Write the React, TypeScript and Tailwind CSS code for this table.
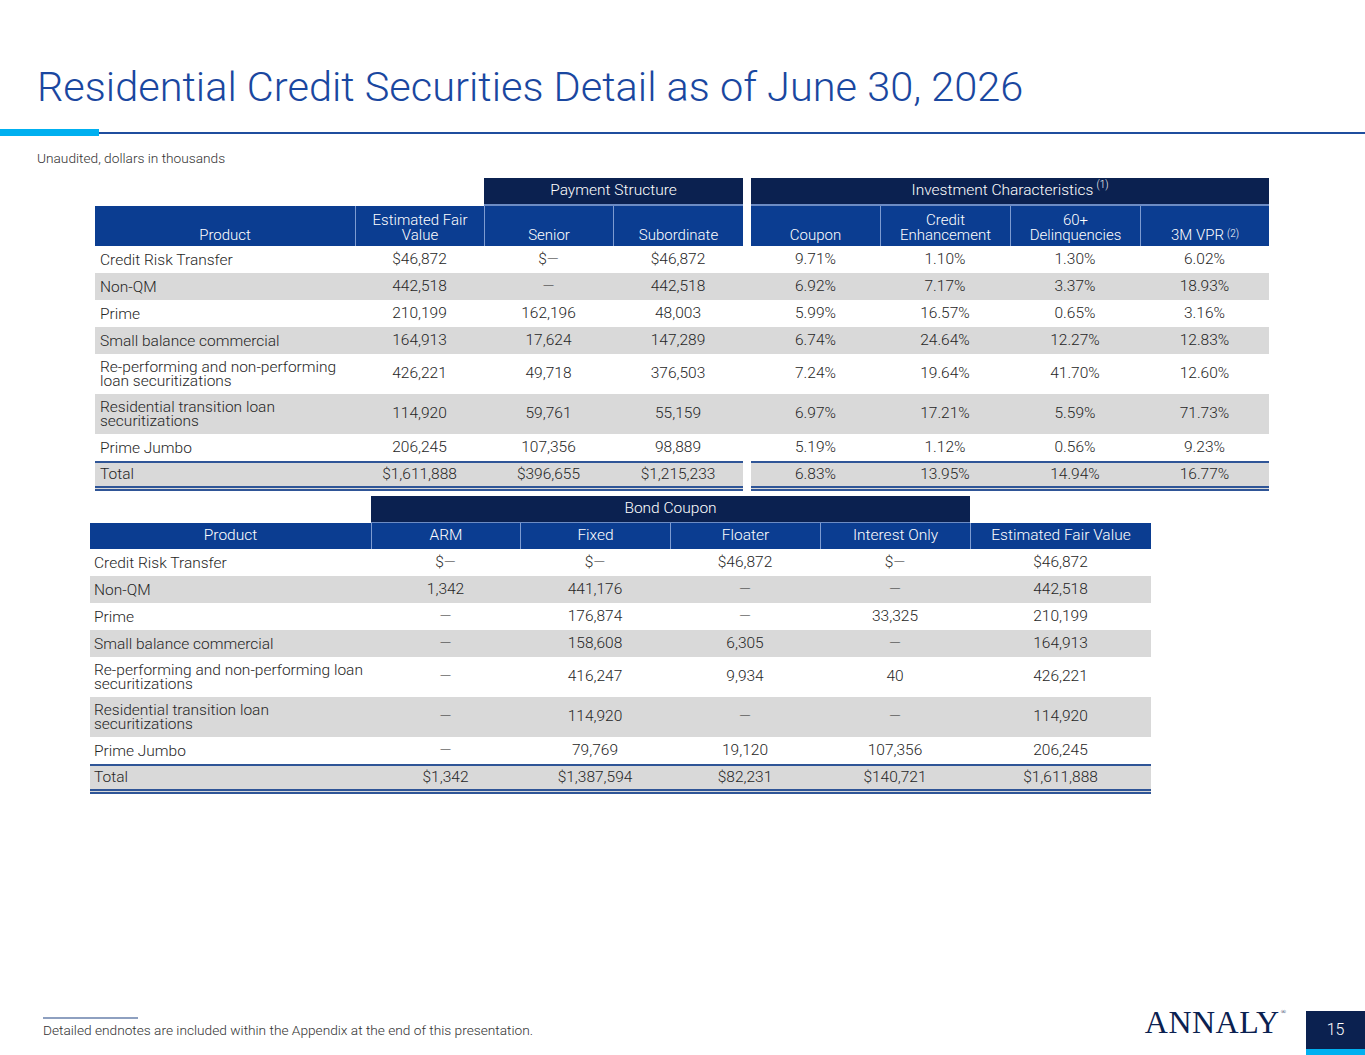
import React from "react";

const NAVY = "bg-[#0b2150]";
const BLUE = "bg-[#0b3d91]";

type Row = { cells: string[]; tall?: boolean };

const t1Rows: Row[] = [
  { cells: ["Credit Risk Transfer", "$46,872", "$—", "$46,872", "9.71%", "1.10%", "1.30%", "6.02%"] },
  { cells: ["Non-QM", "442,518", "—", "442,518", "6.92%", "7.17%", "3.37%", "18.93%"] },
  { cells: ["Prime", "210,199", "162,196", "48,003", "5.99%", "16.57%", "0.65%", "3.16%"] },
  { cells: ["Small balance commercial", "164,913", "17,624", "147,289", "6.74%", "24.64%", "12.27%", "12.83%"] },
  { cells: ["Re-performing and non-performing\nloan securitizations", "426,221", "49,718", "376,503", "7.24%", "19.64%", "41.70%", "12.60%"], tall: true },
  { cells: ["Residential transition loan\nsecuritizations", "114,920", "59,761", "55,159", "6.97%", "17.21%", "5.59%", "71.73%"], tall: true },
  { cells: ["Prime Jumbo", "206,245", "107,356", "98,889", "5.19%", "1.12%", "0.56%", "9.23%"] },
];
const t1Total = ["Total", "$1,611,888", "$396,655", "$1,215,233", "6.83%", "13.95%", "14.94%", "16.77%"];

const t2Rows: Row[] = [
  { cells: ["Credit Risk Transfer", "$—", "$—", "$46,872", "$—", "$46,872"] },
  { cells: ["Non-QM", "1,342", "441,176", "—", "—", "442,518"] },
  { cells: ["Prime", "—", "176,874", "—", "33,325", "210,199"] },
  { cells: ["Small balance commercial", "—", "158,608", "6,305", "—", "164,913"] },
  { cells: ["Re-performing and non-performing loan\nsecuritizations", "—", "416,247", "9,934", "40", "426,221"], tall: true },
  { cells: ["Residential transition loan\nsecuritizations", "—", "114,920", "—", "—", "114,920"], tall: true },
  { cells: ["Prime Jumbo", "—", "79,769", "19,120", "107,356", "206,245"] },
];
const t2Total = ["Total", "$1,342", "$1,387,594", "$82,231", "$140,721", "$1,611,888"];

const T1_COLS = "grid-cols-[260px_129px_129px_130px_8px_129px_130px_130px_129px]";
const T2_COLS = "grid-cols-[281px_149px_150px_150px_150px_181px]";

function Sup({ n }: { n: number }) {
  return <span className="text-[10px] leading-[10px] align-top relative top-[1px] ml-[3px]">({n})</span>;
}

function HeadCell({ children, sep = true }: { children: React.ReactNode; sep?: boolean }) {
  return (
    <div className={`${BLUE} flex items-end justify-center text-center pb-[3px] text-[15px] leading-[15px] whitespace-pre-line ${sep ? "border-l border-[#7d9bd1]" : ""}`}>
      <span>{children}</span>
    </div>
  );
}

function Num({ v }: { v: string }) {
  return <div className="flex items-center justify-center">{v}</div>;
}

function Table1() {
  return (
    <div className="ml-[95px] w-[1174px] text-[15.5px] font-light text-[#262626]">
      {/* group header */}
      <div className={`grid ${T1_COLS} h-[28px] text-white`}>
        <div className="col-span-2" />
        <div className={`col-span-2 ${NAVY} flex items-center justify-center border-b-2 border-[#6d8cc4]`}>Payment Structure</div>
        <div />
        <div className={`col-span-4 ${NAVY} flex items-center justify-center border-b-2 border-[#6d8cc4]`}>
          <span>Investment Characteristics<Sup n={1} /></span>
        </div>
      </div>
      {/* column header */}
      <div className={`grid ${T1_COLS} h-[40px] text-white`}>
        <HeadCell sep={false}>Product</HeadCell>
        <HeadCell>{"Estimated Fair\nValue"}</HeadCell>
        <HeadCell>Senior</HeadCell>
        <HeadCell>Subordinate</HeadCell>
        <div className="bg-white" />
        <HeadCell sep={false}>Coupon</HeadCell>
        <HeadCell>{"Credit\nEnhancement"}</HeadCell>
        <HeadCell>{"60+\nDelinquencies"}</HeadCell>
        <HeadCell>3M VPR<Sup n={2} /></HeadCell>
      </div>
      {t1Rows.map((r, i) => (
        <div key={i} className={`grid ${T1_COLS} ${r.tall ? "h-[40px]" : "h-[27px]"} ${i % 2 === 1 ? "bg-[#d9d9d9]" : "bg-white"}`}>
          <div className="flex items-center pl-[5px] leading-[14px] whitespace-pre-line">{r.cells[0]}</div>
          {r.cells.slice(1, 4).map((c, j) => <Num key={j} v={c} />)}
          <div />
          {r.cells.slice(4).map((c, j) => <Num key={j} v={c} />)}
        </div>
      ))}
      <div className={`grid ${T1_COLS} h-[30px]`}>
        <div className="col-span-4 grid grid-cols-[260px_129px_129px_130px] bg-[#d9d9d9] border-t-2 border-b-[5px] border-double border-[#2f5597]">
          <div className="flex items-center pl-[5px]">{t1Total[0]}</div>
          {t1Total.slice(1, 4).map((c, j) => <Num key={j} v={c} />)}
        </div>
        <div />
        <div className="col-span-4 grid grid-cols-[129px_130px_130px_129px] bg-[#d9d9d9] border-t-2 border-b-[5px] border-double border-[#2f5597]">
          {t1Total.slice(4).map((c, j) => <Num key={j} v={c} />)}
        </div>
      </div>
    </div>
  );
}

function Table2() {
  const heads = ["ARM", "Fixed", "Floater", "Interest Only", "Estimated Fair Value"];
  return (
    <div className="ml-[90px] w-[1061px] text-[15.5px] font-light text-[#262626] mt-[5px]">
      <div className={`grid ${T2_COLS} h-[27px] text-white`}>
        <div />
        <div className={`col-span-4 ${NAVY} flex items-center justify-center border-b border-[#6d8cc4]`}>Bond Coupon</div>
        <div />
      </div>
      <div className={`grid ${T2_COLS} h-[26px] text-white ${BLUE}`}>
        <div className="flex items-center justify-center">Product</div>
        {heads.map((h) => (
          <div key={h} className="flex items-center justify-center border-l border-[#7d9bd1]">{h}</div>
        ))}
      </div>
      {t2Rows.map((r, i) => (
        <div key={i} className={`grid ${T2_COLS} ${r.tall ? "h-[40px]" : "h-[27px]"} ${i % 2 === 1 ? "bg-[#d9d9d9]" : "bg-white"}`}>
          <div className="flex items-center pl-[4px] leading-[14px] whitespace-pre-line">{r.cells[0]}</div>
          {r.cells.slice(1).map((c, j) => <Num key={j} v={c} />)}
        </div>
      ))}
      <div className={`grid ${T2_COLS} h-[30px] bg-[#d9d9d9] border-t-2 border-b-[5px] border-double border-[#2f5597]`}>
        <div className="flex items-center pl-[4px]">{t2Total[0]}</div>
        {t2Total.slice(1).map((c, j) => <Num key={j} v={c} />)}
      </div>
    </div>
  );
}

export default function App() {
  return (
    <div className="w-[1365px] h-[1055px] bg-white overflow-hidden flex flex-col font-['Roboto',sans-serif]">
      <h1 className="pt-[66px] pl-[37px] text-[41.5px] leading-[42px] font-light text-[#1a47a0] whitespace-nowrap">
        Residential Credit Securities Detail as of June 30, 2026
      </h1>
      <div className="mt-[21px] flex items-center h-[7px]">
        <div className="w-[99px] h-[7px] bg-[#00b0f0]" />
        <div className="flex-1 h-[2px] bg-[#1f4e9e]" />
      </div>
      <p className="mt-[14px] pl-[37px] text-[13.7px] leading-[16px] font-light text-[#333]">Unaudited, dollars in thousands</p>
      <div className="mt-[12px]">
        <Table1 />
        <Table2 />
      </div>

      <div className="mt-auto flex items-end">
        <div className="flex-1 pl-[43px] pb-[17px]">
          <div className="w-[95px] h-[2px] bg-[#8ea0c0]" />
          <p className="mt-[3px] text-[13.7px] leading-[16px] font-light text-[#333]">
            Detailed endnotes are included within the Appendix at the end of this presentation.
          </p>
        </div>
        <div className="pb-[19px] pr-[20px] flex items-start text-[#0b2150] font-['Liberation_Serif',serif]">
          <span className="text-[32px] leading-[28px] tracking-[0.5px]">ANNALY</span>
          <span className="text-[7px] leading-[7px] mt-[1px] ml-[1px]">®</span>
        </div>
        <div className="w-[59px] flex flex-col">
          <div className={`h-[38px] ${NAVY} flex items-center justify-center text-white text-[16px] font-light`}>15</div>
          <div className="h-[6px] bg-[#00b0f0]" />
        </div>
      </div>
    </div>
  );
}
